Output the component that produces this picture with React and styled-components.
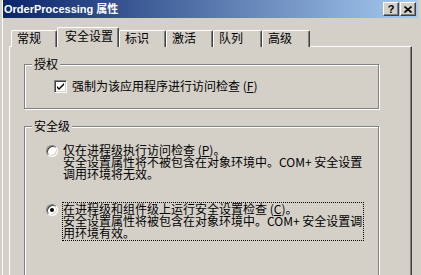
import React from "react"
import styled, { createGlobalStyle } from "styled-components"

const GlobalStyle = createGlobalStyle`
	html, body {
		margin: 0;
		padding: 0;
		background: #d4d0c8;
	}
	body {
		font-family: "Noto Sans CJK SC", "Liberation Sans", sans-serif;
		font-size: 12px;
		color: #000000;
	}
`

const tabs = [
	{ label: "常规", width: 46 },
	{ label: "安全设置", width: 62, active: true },
	{ label: "标识", width: 47 },
	{ label: "激活", width: 47 },
	{ label: "队列", width: 49 },
	{ label: "高级", width: 48 },
]

function CloseGlyph() {
	return (
		<svg width="8" height="7" viewBox="0 0 8 7">
			<path d="M0.5 0.5 L7.5 6.5 M7.5 0.5 L0.5 6.5" stroke="#000" strokeWidth="1.6" />
		</svg>
	)
}

function CheckGlyph() {
	return (
		<svg width="7" height="7" viewBox="0 0 7 7">
			<path d="M0 3 L2 5 L7 0 L7 2 L2 7 L0 5 Z" fill="#000" />
		</svg>
	)
}

export default function App() {
	return (
		<>
			<GlobalStyle />
			<Window>
				<TitleBar>
					<TitleText>OrderProcessing 属性</TitleText>
					<CaptionButtons>
						<CaptionButton>
							<HelpMark>?</HelpMark>
						</CaptionButton>
						<CaptionButton>
							<CloseGlyph />
						</CaptionButton>
					</CaptionButtons>
				</TitleBar>

				<Body>
					<TabRow>
						{tabs.map((t) => (
							<Tab key={t.label} $width={t.width} $active={t.active}>
								{t.label}
							</Tab>
						))}
					</TabRow>

					<Panel>
						<GroupBox $height={45} $padTop={14} $padLeft={29}>
							<GroupLabel>授权</GroupLabel>
							<CheckRow>
								<CheckBox>
									<CheckGlyph />
								</CheckBox>
								<span>
									强制为该应用程序进行访问检查 (<u>F</u>)
								</span>
							</CheckRow>
						</GroupBox>

						<GroupBox $height={200} $padTop={16} $padLeft={21} $gap={20}>
							<GroupLabel>安全级</GroupLabel>
							<RadioRow>
								<Radio />
								<RadioText>
									仅在进程级执行访问检查 (<u>P</u>)。
									<br />
									安全设置属性将不被包含在对象环境中。COM+ 安全设置
									<br />
									调用环境将无效。
								</RadioText>
							</RadioRow>
							<RadioRow>
								<Radio $checked />
								<RadioText $focused>
									在进程级和组件级上运行安全设置检查 (<u>C</u>)。
									<br />
									安全设置属性将被包含在对象环境中。COM+ 安全设置调
									<br />
									用环境有效。
								</RadioText>
							</RadioRow>
						</GroupBox>
					</Panel>
				</Body>
			</Window>
		</>
	)
}

const Window = styled.div`
	width: 421px;
	height: 275px;
	overflow: hidden;
	box-sizing: border-box;
	padding: 0 3px;
	background: #d4d0c8;
	box-shadow: inset 2px 0 0 #d4d0c8, inset 3px 0 0 #ffffff;
`

const TitleBar = styled.div`
	height: 18px;
	display: flex;
	align-items: center;
	justify-content: space-between;
	padding: 0 2px 0 1px;
	background: linear-gradient(to right, #0a246a, #a6caf0);
`

const TitleText = styled.div`
	font-family: "Liberation Sans", "Noto Sans CJK SC", sans-serif;
	font-weight: 700;
	font-size: 11px;
	color: #ffffff;
	line-height: 14px;
	white-space: nowrap;
`

const CaptionButtons = styled.div`
	display: flex;
	gap: 1px;
`

const CaptionButton = styled.div`
	width: 16px;
	height: 14px;
	box-sizing: border-box;
	display: flex;
	align-items: center;
	justify-content: center;
	background: #d4d0c8;
	border-top: 1px solid #ffffff;
	border-left: 1px solid #ffffff;
	border-right: 1px solid #404040;
	border-bottom: 1px solid #404040;
	box-shadow: inset -1px -1px 0 #808080;
`

const HelpMark = styled.span`
	font-family: "Liberation Sans", sans-serif;
	font-weight: 700;
	font-size: 11px;
	line-height: 11px;
	margin-top: 1px;
`

const Body = styled.div`
	padding: 9px 6px 0 6px;
`

const TabRow = styled.div`
	display: flex;
	align-items: flex-end;
	padding-left: 2px;
`

const Tab = styled.div`
	position: relative;
	z-index: ${(p) => (p.$active ? 1 : 0)};
	width: ${(p) => p.$width}px;
	height: ${(p) => (p.$active ? 20 : 17)}px;
	box-sizing: border-box;
	padding-left: ${(p) => (p.$active ? 7 : 5)}px;
	padding-top: ${(p) => (p.$active ? 1 : 0)}px;
	background: #d4d0c8;
	border-top: 1px solid #ffffff;
	border-left: 1px solid #ffffff;
	border-right: 1px solid #404040;
	border-radius: 2px 2px 0 0;
	box-shadow: inset -1px 0 0 #808080;
	line-height: 14px;
	white-space: nowrap;
`

const Panel = styled.div`
	margin-top: -1px;
	width: 403px;
	height: 240px;
	box-sizing: border-box;
	padding: 17px 0 0 14px;
	border-top: 1px solid #ffffff;
	border-left: 1px solid #ffffff;
	border-right: 1px solid #404040;
	box-shadow: inset -1px 0 0 #808080;
	display: flex;
	flex-direction: column;
	gap: 17px;
`

const GroupBox = styled.div`
	position: relative;
	width: 355px;
	height: ${(p) => p.$height}px;
	flex: none;
	box-sizing: border-box;
	padding: ${(p) => p.$padTop}px 0 0 ${(p) => p.$padLeft}px;
	border: 1px solid #808080;
	box-shadow: inset 1px 1px 0 #ffffff, 1px 1px 0 #ffffff;
	display: flex;
	flex-direction: column;
	gap: ${(p) => p.$gap || 0}px;
`

const GroupLabel = styled.span`
	position: absolute;
	top: -8px;
	left: 7px;
	padding: 0 2px;
	background: #d4d0c8;
	line-height: 14px;
`

const CheckRow = styled.div`
	display: flex;
	align-items: center;
	gap: 5px;
	line-height: 14px;
	white-space: nowrap;
`

const CheckBox = styled.div`
	width: 13px;
	height: 13px;
	box-sizing: border-box;
	display: flex;
	align-items: center;
	justify-content: center;
	background: #ffffff;
	border-top: 1px solid #808080;
	border-left: 1px solid #808080;
	border-right: 1px solid #ffffff;
	border-bottom: 1px solid #ffffff;
	box-shadow: inset 1px 1px 0 #404040, inset -1px -1px 0 #d4d0c8;
`

const RadioRow = styled.div`
	display: flex;
	align-items: flex-start;
	gap: 4px;
`

const Radio = styled.div`
	width: 12px;
	height: 12px;
	margin-top: 2px;
	flex: none;
	box-sizing: border-box;
	border-radius: 50%;
	background: #ffffff;
	border-top: 1px solid #808080;
	border-left: 1px solid #808080;
	border-right: 1px solid #ffffff;
	border-bottom: 1px solid #ffffff;
	box-shadow: inset 1px 1px 0 #404040, inset -1px -1px 0 #d4d0c8;
	display: flex;
	align-items: center;
	justify-content: center;

	&::after {
		content: "";
		width: 4px;
		height: 4px;
		border-radius: 50%;
		background: ${(p) => (p.$checked ? "#000000" : "transparent")};
	}
`

const RadioText = styled.div`
	border: 1px dotted ${(p) => (p.$focused ? "#000000" : "transparent")};
	padding: 0 1px 1px 0;
	line-height: 12px;
	white-space: nowrap;
`
